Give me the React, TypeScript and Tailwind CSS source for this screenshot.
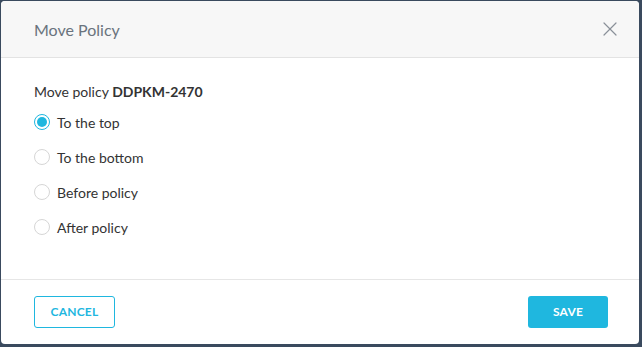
import { X } from "lucide-react";
import { useState } from "react";

const options = ["To the top", "To the bottom", "Before policy", "After policy"];

export default function App() {
  const [selected, setSelected] = useState(0);

  return (
    <div className="w-[642px] h-[347px] bg-[#3a4a5e] pt-px pl-px pr-[3px] pb-[3px] font-['Lato',sans-serif]">
      <div className="w-full h-full bg-white rounded-[4px] overflow-hidden flex flex-col">
        <div className="h-[57px] shrink-0 bg-[#f7f7f7] border-b border-[#e3e3e3] flex items-center justify-between pl-[33px] pr-[17px]">
          <span className="text-[16px] text-[#6a737d] mt-px">Move Policy</span>
          <X size={24} strokeWidth={1.2} className="text-[#8a9099]" />
        </div>

        <div className="flex-1 pl-[33px] pt-[24px]">
          <p className="text-[14px] text-[#333] leading-[20px]">
            Move policy <span className="font-bold">DDPKM-2470</span>
          </p>
          <div className="mt-[10px] flex flex-col gap-[15px]">
            {options.map((opt, i) => (
              <label
                key={opt}
                className="flex items-center gap-[7px] h-[20px] cursor-pointer"
                onClick={() => setSelected(i)}
              >
                {selected === i ? (
                  <span className="w-[16px] h-[16px] rounded-full border border-[#1fb7df] flex items-center justify-center">
                    <span className="w-[10px] h-[10px] rounded-full bg-[#1fb7df]" />
                  </span>
                ) : (
                  <span className="w-[16px] h-[16px] rounded-full border border-[#d6d6d6] bg-white" />
                )}
                <span className="text-[14px] text-[#333]">{opt}</span>
              </label>
            ))}
          </div>
        </div>

        <div className="h-[65px] shrink-0 border-t border-[#e6e6e6] flex items-start justify-between pl-[33px] pr-[31px] pt-[16px]">
          <button className="w-[81px] h-[32px] rounded-[3px] border border-[#1fb7df] text-[#1fb7df] text-[12px] font-bold tracking-[0.2px]">
            CANCEL
          </button>
          <button className="w-[80px] h-[32px] rounded-[3px] bg-[#1fb7df] text-white text-[12px] font-bold tracking-[0.2px]">
            SAVE
          </button>
        </div>
      </div>
    </div>
  );
}
